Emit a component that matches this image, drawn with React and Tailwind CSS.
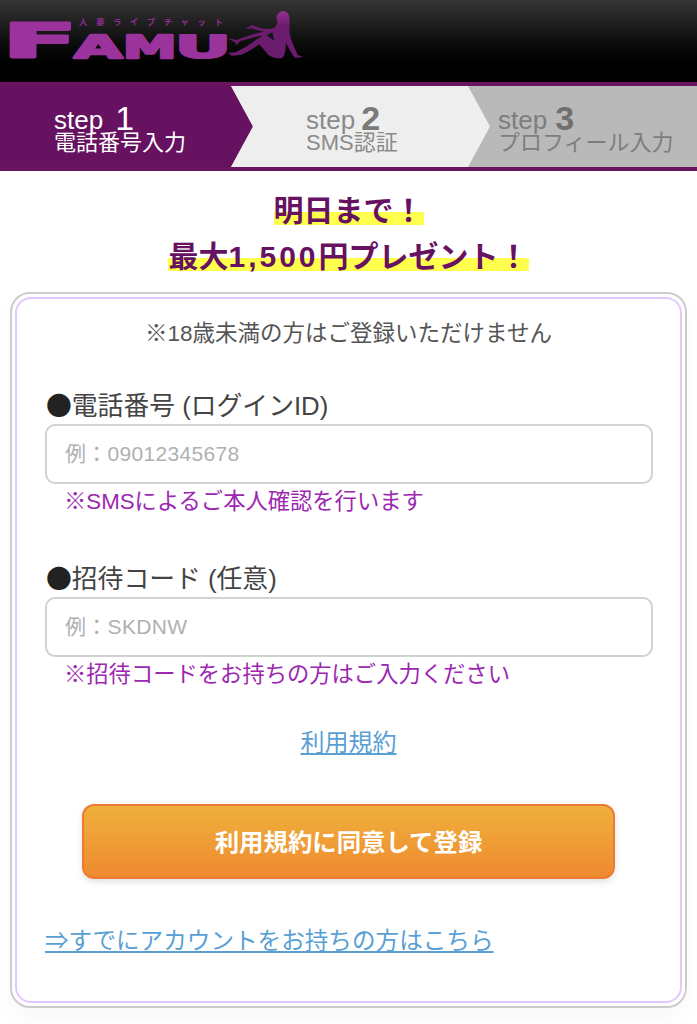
const font = "font-['Liberation_Sans','Noto_Sans_CJK_JP',sans-serif]";

// wide blobby logo letter, real text stretched horizontally
function LogoLetter({ ch, x, y, size, sx, stroke }) {
  return (
    <text
      transform={`translate(${x} ${y}) scale(${sx} 1)`}
      fontSize={size}
      fontWeight="700"
      fontFamily="'DejaVu Sans',sans-serif"
      fill="url(#logoFill)"
      stroke="url(#logoFill)"
      strokeWidth={stroke}
      strokeLinejoin="round"
      vectorEffect="non-scaling-stroke"
    >
      {ch}
    </text>
  );
}

function Logo() {
  return (
    <svg width="310" height="70" viewBox="0 0 310 70">
      <defs>
        <linearGradient id="logoFill" gradientUnits="userSpaceOnUse" x1="0" y1="12" x2="0" y2="62">
          <stop offset="0" stopColor="#9a349c" />
          <stop offset="1" stopColor="#6c1c6e" />
        </linearGradient>
      </defs>
      <text x="79" y="25" fontSize="8.5" fontWeight="700" fill="#8e2c90" fontFamily="'Noto Sans CJK JP',sans-serif" textLength="144">人妻ライブチャット</text>
      <LogoLetter ch="F" x="3" y="57" size="47" sx="2.3" stroke="5" />
      <LogoLetter ch="A" x="74" y="58" size="32" sx="1.95" stroke="3.5" />
      <LogoLetter ch="M" x="123" y="58" size="32" sx="1.68" stroke="3.5" />
      <LogoLetter ch="U" x="175" y="58" size="32" sx="2.15" stroke="3.5" />
      {/* silhouette */}
      <g transform="translate(215 5) scale(0.3333)">
        <path
          fill="url(#logoFill)"
          fillRule="evenodd"
          d="M205 18C220 20 224 32 224 50C224 65 222 78 226 95C232 115 240 130 248 150L265 156L240 158C232 150 222 130 212 112C213 130 210 150 203 158C190 162 170 160 158 148C150 138 142 128 133 118C115 130 95 145 75 150L50 152L40 143L62 142L75 135C95 125 110 115 122 105L142 93C120 93 95 105 75 108L65 120L60 112L38 100L65 105C90 95 120 85 148 80C135 78 120 72 108 70L90 72L100 66L112 60C130 70 155 75 175 70C185 65 190 55 185 42C183 30 192 20 205 18ZM155 90L172 82L178 108Z"
        />
      </g>
    </svg>
  );
}

function Step({ num, sub, color, numClass }) {
  return (
    <div className={`mt-[7px] flex flex-col ${color}`}>
      <div className="flex items-end">
        <span className="text-[26px] leading-[20px]">step</span>
        <span className={`text-[34px] leading-[24px] ${numClass}`}>{num}</span>
      </div>
      <span className="mt-[1px] text-[22px] leading-[24px] whitespace-nowrap">{sub}</span>
    </div>
  );
}

function Field({ label, placeholder, note }) {
  return (
    <div>
      <div className="h-[36px] pl-[29px] text-[25.8px] leading-[32px] text-[#444]">
        <span className="font-['Noto_Sans_CJK_JP',sans-serif] text-[#222]">●</span>
        {label}
      </div>
      <input
        placeholder={placeholder}
        className="ml-[28px] block h-[60px] w-[608px] rounded-[10px] border-2 border-[#d2d2d2] bg-white px-[18px] text-[21px] tracking-[0.3px] outline-none placeholder:text-[#b0b0b0]"
      />
      <div className="pt-[1px] pl-[47px] text-[22.3px] leading-[34px] text-[#9c27b0]">{note}</div>
    </div>
  );
}

const marker = "bg-[linear-gradient(transparent_52%,#ffff4d_52%,#ffff4d_90%,transparent_90%)]";

export default function App() {
  return (
    <div className={`min-h-[1024px] w-[697px] overflow-hidden bg-white ${font}`}>
      {/* Header */}
      <div className="h-[82px] bg-gradient-to-b from-[#363636] to-black">
        <Logo />
      </div>

      {/* Steps */}
      <div className="flex h-[89px] border-y-[4px] border-[#68145f] bg-[#b9b9b9]">
        <div className="flex h-full w-[253px] shrink-0 items-center bg-[#661261] pl-[54px] [clip-path:polygon(0_0,231px_0,253px_50%,231px_100%,0_100%)]">
          <Step num="1" sub="電話番号入力" color="text-white" numClass="ml-[12px] font-normal text-white" />
        </div>
        <div className="-ml-[22px] flex h-full w-[259px] shrink-0 items-center bg-[#eeeeee] pl-[75px] [clip-path:polygon(0_0,237px_0,259px_50%,237px_100%,0_100%,22px_50%)]">
          <Step num="2" sub="SMS認証" color="text-[#8a8a8a]" numClass="ml-[6px] font-bold text-[#7a7a7a]" />
        </div>
        <div className="flex h-full flex-1 items-center pl-[8px]">
          <Step num="3" sub="プロフィール入力" color="text-[#7d7d7d]" numClass="ml-[8px] font-bold text-[#707070]" />
        </div>
      </div>

      {/* Campaign */}
      <div className="mt-[22px] flex flex-col items-center gap-[10px] text-[30px] leading-[36px] font-bold text-[#661261]">
        <span className={marker}>明日まで！</span>
        <span className={marker}>
          最大<span className="tracking-[3px]">1,500</span>円プレゼント！
        </span>
      </div>

      {/* Card */}
      <div className="mx-[10px] mt-[17px] h-[716px] rounded-[20px] border-2 border-[#cccccc] p-[3px] shadow-[0_10px_20px_rgba(0,0,0,0.03)]">
        <div className="h-full rounded-[16px] border-2 border-[#e3c8ff] bg-white pt-[17px]">
          <div className="text-center text-[22.5px] leading-[36px] text-[#555]">※18歳未満の方はご登録いただけません</div>
          <div className="mt-[36px]">
            <Field label="電話番号 (ログインID)" placeholder="例：09012345678" note="※SMSによるご本人確認を行います" />
          </div>
          <div className="mt-[42px]">
            <Field label="招待コード (任意)" placeholder="例：SKDNW" note="※招待コードをお持ちの方はご入力ください" />
          </div>
          <div className="mt-[33px] text-center text-[24px] leading-[36px] text-[#5a9fd4] underline">利用規約</div>
          <button className="mt-[43px] ml-[65px] flex h-[75px] w-[533px] items-center justify-center rounded-[12px] border-2 border-[#ee7a33] bg-gradient-to-b from-[#efb03c] to-[#ee8a30] pt-[4px] text-[24.4px] font-semibold text-white shadow-[0_3px_6px_rgba(0,0,0,0.12)]">
            利用規約に同意して登録
          </button>
          <div className="mt-[44px] pl-[28px] text-[23.6px] leading-[36px] text-[#5a9fd4] underline">⇒すでにアカウントをお持ちの方はこちら</div>
        </div>
      </div>
    </div>
  );
}
